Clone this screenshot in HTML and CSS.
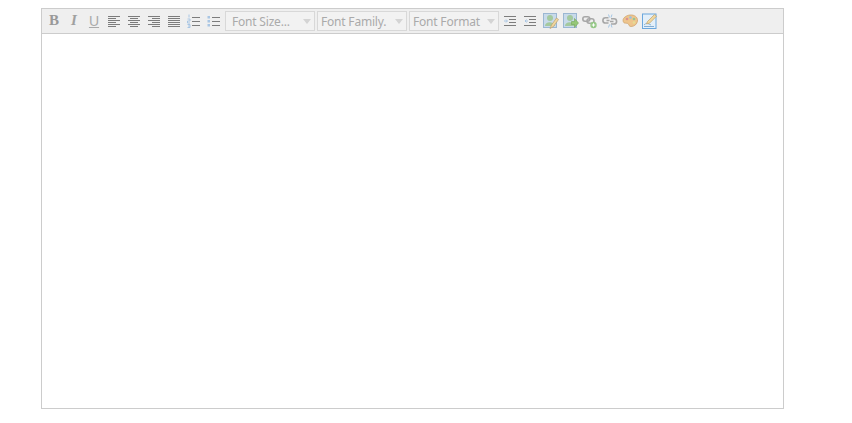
FILE: index.html
```html
<!DOCTYPE html>
<html lang="en">
<head>
<meta charset="utf-8">
<title>Editor</title>
<link rel="stylesheet" href="styles.css">
</head>
<body>
<div class="editor">
  <div class="toolbar">
    <span class="btn glyph bold">B</span>
    <span class="btn glyph italic">I</span>
    <span class="btn glyph under">U</span>
    <span class="btn"><svg class="ico" viewBox="0 0 14 14"><path d="M1 2.500h12M1 4.500h8M1 6.500h12M1 8.500h8M1 10.500h12M1 12.500h8"/></svg></span>
    <span class="btn"><svg class="ico" viewBox="0 0 14 14"><path d="M1 2.500h12M3 4.500h8M1 6.500h12M3 8.500h8M1 10.500h12M3 12.500h8"/></svg></span>
    <span class="btn"><svg class="ico" viewBox="0 0 14 14"><path d="M1 2.500h12M5 4.500h8M1 6.500h12M5 8.500h8M1 10.500h12M5 12.500h8"/></svg></span>
    <span class="btn"><svg class="ico" viewBox="0 0 14 14"><path d="M1 2.500h12M1 4.500h12M1 6.500h12M1 8.500h12M1 10.500h12M1 12.500h12"/></svg></span>
    <span class="btn"><svg class="ico" viewBox="0 0 14 14"><path d="M5 3.500h8M5 7.500h8M5 11.500h8"/><path class="blue" d="M2 .5v3M.5 5h2.500v2h-2.500v2h2.500M.5 10.500h2.500v3h-2.500M1 12h2"/></svg></span>
    <span class="btn"><svg class="ico" viewBox="0 0 14 14"><path d="M5 3.500h8M5 7.500h8M5 11.500h8"/><path class="dots" d="M.5 2h2.500v2.500h-2.500zM.5 6h2.500v2.500h-2.500zM.5 10h2.500v2.500h-2.500z"/></svg></span>
    <span class="select first"><span class="label">Font Size...</span><i class="caret"></i></span>
    <span class="select"><span class="label">Font Family.</span><i class="caret"></i></span>
    <span class="select last"><span class="label">Font Format</span><i class="caret"></i></span>
    <span class="btn"><svg class="ico" viewBox="0 0 14 14"><path d="M1 2.500h12M6 5.500h7M6 8.500h7M1 11.500h12"/><path class="blue" d="M1 7h3M3 5.500l1.500 1.500-1.500 1.500"/></svg></span>
    <span class="btn"><svg class="ico" viewBox="0 0 14 14"><path d="M1 2.500h12M6 5.500h7M6 8.500h7M1 11.500h12"/><path class="blue" d="M5 7h-3M3.500 5.500l-1.500 1.500 1.500 1.500"/></svg></span>
    <span class="btn"><svg class="pic nudge" width="16" height="16" viewBox="0 0 16 16"><rect x=".5" y=".5" width="13" height="14" fill="#c4d8ea" stroke="#92b2cf"/><circle cx="7" cy="5" r="3" fill="#9cc596"/><path d="M2 13c0-5 9-5 10 0z" fill="#9cc596"/><path d="M7 15.500l1.500-3.500 5-7 2 1.500-5 7z" fill="#f2d596" stroke="#b89a62" stroke-width=".7"/></svg></span>
    <span class="btn"><svg class="pic nudge" width="16" height="16" viewBox="0 0 16 16"><rect x=".5" y=".5" width="13" height="14" fill="#c4d8ea" stroke="#92b2cf"/><circle cx="7" cy="5" r="3" fill="#9cc596"/><path d="M2 13c0-5 9-5 10 0z" fill="#9cc596"/><path d="M8.500 8.500h3v-3l4 4.500-4 4.500v-3h-3z" fill="#8cc46c" stroke="#66a048" stroke-width=".6"/></svg></span>
    <span class="btn"><svg class="pic" width="16" height="16" viewBox="0 0 16 16"><g fill="none" stroke="#a0a0a0" stroke-width="1.600"><rect x=".8" y="3.800" width="7" height="4.500" rx="2.200"/><rect x="5" y="5.800" width="7" height="4.500" rx="2.200"/></g><circle cx="11.500" cy="12" r="3.200" fill="#8cc47c"/><path d="M9.800 12h3.400M11.500 10.300v3.400" stroke="#fff"/></svg></span>
    <span class="btn"><svg class="pic" width="16" height="16" viewBox="0 0 16 16"><g fill="none" stroke="#a0a0a0" stroke-width="1.600"><path d="M6.500 4.800h-3a2.600 2.600 0 0 0 0 5.200h3M9 5.800h3a2.600 2.600 0 0 1 0 5.200h-3"/><path d="M4.500 7.500h3M8 8.500h3.500"/></g><path d="M6.500 1.500l1 3M10 1.500l-1 3M6.500 14.500l1-3M10 14.500l-1-3" stroke="#9cc2e4"/></svg></span>
    <span class="btn"><svg class="pic" width="16" height="16" viewBox="0 0 16 16"><path d="M8 2c4-.5 8 2 7.500 6-.4 3-3 5.500-6.500 5.500-2 0-2-1.500-2.500-2.500S4 10.500 2.500 10 0 6 3 4c1.500-1.200 3-1.800 5-2z" fill="#eec183" stroke="#c9985a" stroke-width=".7"/><circle cx="5" cy="6" r="1.300" fill="#d98a8a"/><circle cx="8.500" cy="4.500" r="1.300" fill="#8fbce0"/><circle cx="12" cy="6" r="1.300" fill="#8fc08a"/><circle cx="12" cy="9.500" r="1.300" fill="#e4dc8a"/></svg></span>
    <span class="btn"><svg class="pic" width="16" height="16" viewBox="0 0 16 16"><rect x=".5" y="1" width="13.500" height="14.500" fill="#e2f0fb" stroke="#5da0dc"/><path d="M2 12c2-2 3-2 5-1l2 1" fill="none" stroke="#7fb0d8"/><path d="M4.500 11l1-2.500 7-7 2 1.700-7 7z" fill="#f2d596" stroke="#b89a62" stroke-width=".7"/><path d="M2 13.500h10" stroke="#7aa7d0"/></svg></span>
  </div>
  <div class="content"></div>
</div>
</body>
</html>
```

FILE: styles.css
```css
html, body {
  margin: 0;
  background: #fff;
}

body {
  padding: 8px 0 0 41px;
}

.editor {
  width: 741px;
  height: 399px;
  border: 1px solid #ccc;
  display: flex;
  flex-direction: column;
}

.toolbar {
  height: 25px;
  flex: none;
  box-sizing: border-box;
  display: flex;
  align-items: center;
  padding: 0 0 1px 2px;
  background: #efefef;
  border-bottom: 1px solid #ccc;
}

.content {
  flex: 1;
  background: #fff;
}

.btn {
  width: 20px;
  height: 20px;
  flex: none;
  display: flex;
  align-items: center;
  justify-content: center;
}

.glyph {
  font-family: "Liberation Serif", serif;
  color: #999;
  font-size: 15px;
  line-height: 1;
}

.bold {
  font-weight: 700;
}

.italic {
  font-style: italic;
  font-weight: 700;
  color: #a0a0a0;
}

.under {
  font-family: "Liberation Sans", sans-serif;
  font-size: 14px;
  text-decoration: underline;
  color: #aaa;
}

.ico {
  width: 14px;
  height: 14px;
  fill: none;
  stroke: #7c7c7c;
  stroke-width: 1;
}

.ico .blue {
  stroke: #a9c6e4;
}

.ico .dots {
  fill: #a9c6e4;
  stroke: none;
}

.pic {
  opacity: .9;
}

.nudge {
  margin-left: 2px;
}

.select {
  width: 90px;
  height: 20px;
  flex: none;
  box-sizing: border-box;
  margin-right: 2px;
  padding: 0 3px;
  display: flex;
  align-items: center;
  background: #f2f2f2;
  border: 1px solid #d8d8d8;
  font-family: "Noto Sans", sans-serif;
  font-size: 12px;
  letter-spacing: -.2px;
  color: #aaa;
}

.first {
  margin-left: 1px;
}

.last {
  margin-right: 1px;
}

.first .label {
  padding-left: 3px;
}

.label {
  flex: 1;
  padding-top: 2px;
  line-height: 16px;
  white-space: nowrap;
}

.caret {
  flex: none;
  width: 0;
  height: 0;
  margin-top: 1px;
  border-left: 4px solid transparent;
  border-right: 4px solid transparent;
  border-top: 5px solid #d4d4d4;
}
```
